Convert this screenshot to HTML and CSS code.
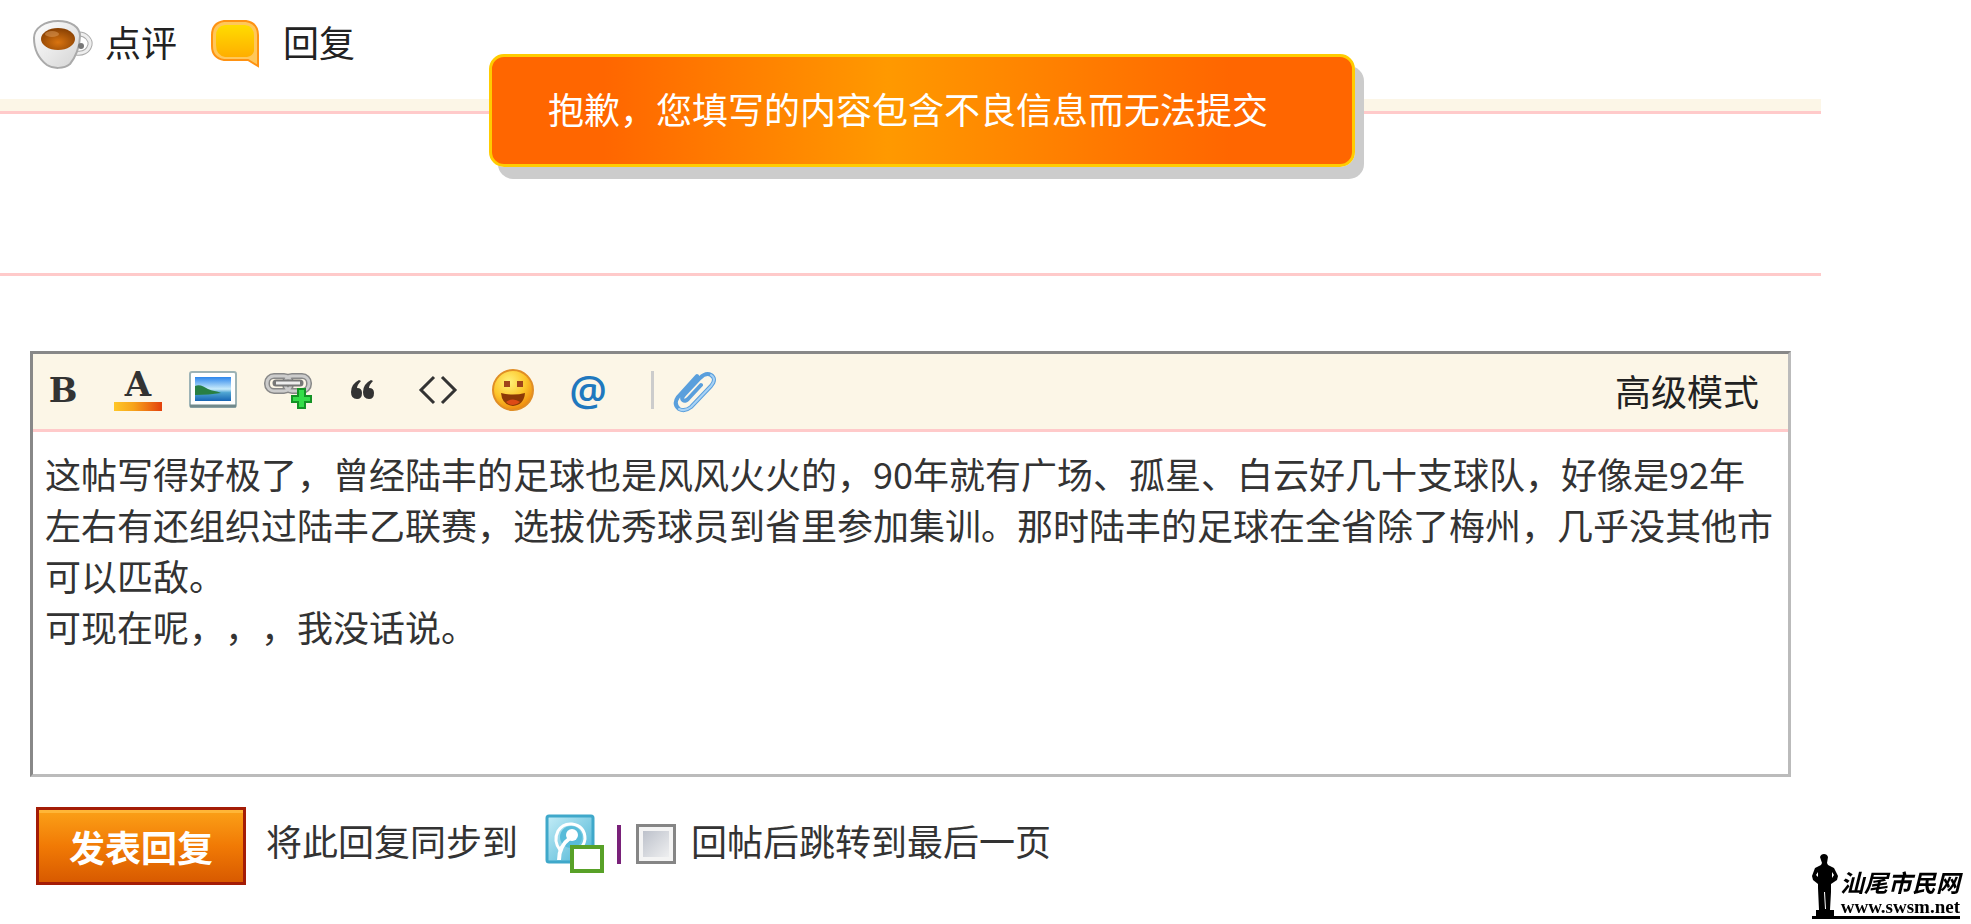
FILE: index.html
```html
<!DOCTYPE html>
<html lang="zh-CN">
<head>
    <meta charset="UTF-8">
    <meta name="viewport" content="width=device-width, initial-scale=1.0">
    <title>发表回复</title>
    <link rel="stylesheet" href="styles.css">
</head>
<body>
    <div class="thread">
        <div class="post-links">
            <a href="#comment">
                <svg width="62" height="52" viewBox="0 0 62 52">
                    <defs>
                        <linearGradient id="cup" x1="0" y1="0" x2="1" y2="1">
                            <stop offset="0" stop-color="#fff"/>
                            <stop offset="1" stop-color="#d4d4d4"/>
                        </linearGradient>
                        <radialGradient id="coffee" cx="50%" cy="65%" r="60%">
                            <stop offset="0" stop-color="#d97410"/>
                            <stop offset="1" stop-color="#8c4304"/>
                        </radialGradient>
                    </defs>
                    <path d="M47 15c7 0 12 6 11 11-2 7-8 9-14 8" fill="none" stroke="#aaa" stroke-width="5"/>
                    <path d="M47 15c7 0 12 6 11 11-2 7-8 9-14 8" fill="none" stroke="#eee" stroke-width="3"/>
                    <path d="M2 19C2 9 13 2 26 2s22 6 22 15c0 11-5 22-10 28-6 5-17 5-23 1C7 40 2 30 2 19z" fill="url(#cup)" stroke="#aaa" stroke-width="2"/>
                    <ellipse cx="26" cy="20" rx="17" ry="11" fill="url(#coffee)"/>
                    <ellipse cx="20" cy="15" rx="7" ry="3" fill="#e0a060" opacity=".5"/>
                    <circle cx="49" cy="27" r="3" fill="#777"/>
                </svg>
                <span>点评</span>
            </a>
            <a href="#reply" class="reply-link">
                <svg width="50" height="50" viewBox="0 0 50 50">
                    <defs>
                        <linearGradient id="bubble" x1="0" y1="0" x2="0" y2="1">
                            <stop offset="0" stop-color="#ffdc00"/>
                            <stop offset="1" stop-color="#ffae00"/>
                        </linearGradient>
                    </defs>
                    <path d="M14 2h22q12 2 12 14v31l-10-6H14Q2 39 2 27V16Q2 4 14 2z" fill="#ffc75a" stroke="#ff9212" stroke-width="2"/>
                    <path d="M15 6h20q9 1 9 11v15q-1 5-7 6H15q-9-2-9-12V17Q6 7 15 6z" fill="url(#bubble)"/>
                </svg>
                <span>回复</span>
            </a>
        </div>
        <div class="post-end"></div>
        <div class="pager"></div>

        <form class="fastpost">
            <div class="editor">
                <div class="toolbar">
                    <div class="tools">
                        <button type="button" title="粗体" class="tool-bold">B</button>
                        <button type="button" title="颜色" class="tool-color"><span>A</span><i></i></button>
                        <button type="button" title="图片">
                            <svg width="48" height="38" viewBox="0 0 48 38">
                                <defs>
                                    <linearGradient id="sky" x1="0" y1="0" x2="0" y2="1">
                                        <stop offset="0" stop-color="#2d86ec"/>
                                        <stop offset=".5" stop-color="#c9ecfb"/>
                                        <stop offset=".65" stop-color="#4fa5d2"/>
                                        <stop offset="1" stop-color="#1765b4"/>
                                    </linearGradient>
                                </defs>
                                <rect x="1" y="1" width="46" height="35" rx="2" fill="#fff" stroke="#9db3b6" stroke-width="2"/>
                                <path d="M1 35h46" stroke="#71898b" stroke-width="3"/>
                                <rect x="6" y="6" width="36" height="24" fill="url(#sky)"/>
                                <path d="M6 15c5-2 9 1 13 3s9 2 13 4c-8 1-17 2-26 2z" fill="#287f43"/>
                            </svg>
                        </button>
                        <button type="button" title="链接">
                            <svg width="48" height="38" viewBox="0 0 48 38">
                                <g fill="none" stroke="#888" stroke-width="6">
                                    <rect x="3" y="5" width="24" height="15" rx="7"/>
                                    <rect x="21" y="5" width="24" height="15" rx="7"/>
                                </g>
                                <g fill="none" stroke="#ccc" stroke-width="3">
                                    <rect x="3" y="5" width="24" height="15" rx="7"/>
                                    <rect x="21" y="5" width="24" height="15" rx="7"/>
                                </g>
                                <path d="M12 12h24" stroke="#777" stroke-width="7" stroke-linecap="round"/>
                                <path d="M12 12h24" stroke="#eee" stroke-width="3"/>
                                <path d="M34 18h7v7h6v6h-6v6h-7v-6h-6v-6h6z" fill="#35dd49" stroke="#149326" stroke-width="2"/>
                            </svg>
                        </button>
                        <button type="button" title="引用">
                            <svg width="24" height="24" viewBox="0 0 24 24">
                                <path id="q" d="M8 2Q0 6 0 14q0 7 6 7 5 0 5-6 0-5-5-5 0-3 4-7z" fill="#333"/>
                                <use href="#q" x="12"/>
                            </svg>
                        </button>
                        <button type="button" title="代码">
                            <svg width="40" height="30" viewBox="0 0 40 30">
                                <path d="M16 2L3 15l13 13M24 2l13 13-13 13" fill="none" stroke="#333" stroke-width="3"/>
                            </svg>
                        </button>
                        <button type="button" title="表情">
                            <svg width="44" height="44" viewBox="0 0 44 44">
                                <defs>
                                    <radialGradient id="face" cx="40%" cy="30%" r="70%">
                                        <stop offset="0" stop-color="#fff27a"/>
                                        <stop offset=".6" stop-color="#fdc62a"/>
                                        <stop offset="1" stop-color="#ee8b10"/>
                                    </radialGradient>
                                </defs>
                                <circle cx="22" cy="22" r="20" fill="url(#face)" stroke="#e08e26" stroke-width="2"/>
                                <path d="M13 13h6v6h-6zM26 13h6v6h-6z" fill="#a0441a"/>
                                <path d="M10 25q12 3 24 0-1 12-12 13-11-1-12-13z" fill="#8c3a06"/>
                                <path d="M15 34q7-5 14 0-7 6-14 0z" fill="#dd4b16"/>
                            </svg>
                        </button>
                        <button type="button" title="@朋友" class="tool-at">@</button>
                    </div>
                    <div class="attach">
                        <button type="button" title="附件">
                            <svg width="46" height="46" viewBox="0 0 46 46">
                                <g fill="none" stroke-linecap="round" stroke-linejoin="round">
                                    <path d="M29 18L16 32q-3 3-5 1t1-5L28 11q6-6 11-3 6 4 0 11L19 40q-6 5-12 2-6-5-1-12L25 9" stroke="#5a9fdc" stroke-width="4"/>
                                    <path d="M39 8q6 4 0 11L19 40q-6 5-12 2" stroke="#a8d2f5" stroke-width="2"/>
                                </g>
                            </svg>
                        </button>
                    </div>
                    <a href="#advanced" class="advanced">高级模式</a>
                </div>
                <textarea rows="6" aria-label="回复内容">这帖写得好极了，曾经陆丰的足球也是风风火火的，90年就有广场、孤星、白云好几十支球队，好像是92年左右有还组织过陆丰乙联赛，选拔优秀球员到省里参加集训。那时陆丰的足球在全省除了梅州，几乎没其他市可以匹敌。
可现在呢，，，我没话说。</textarea>
            </div>
            <div class="post-actions">
                <button type="submit" class="submit">发表回复</button>
                <div class="options">
                    <span class="text">将此回复同步到</span>
                    <a href="#weibo" class="sync" title="腾讯微博">
                        <svg width="60" height="60" viewBox="0 0 60 60">
                            <defs>
                                <linearGradient id="weibo" x1="0" y1="0" x2="1" y2="1">
                                    <stop offset="0" stop-color="#c4edf7"/>
                                    <stop offset="1" stop-color="#48b3d4"/>
                                </linearGradient>
                            </defs>
                            <rect x="2" y="2" width="46" height="46" rx="2" fill="url(#weibo)" stroke="#3fa8ca" stroke-width="3"/>
                            <path d="M15 36q-7-9-2-19 5-8 14-7 13 2 13 15-1 7-6 10" fill="none" stroke="#fff" stroke-width="3"/>
                            <circle cx="26" cy="23" r="11" fill="#58bcd9"/>
                            <circle cx="27" cy="21" r="6" fill="#fff"/>
                            <path d="M25 24q-11 8-11 22" fill="none" stroke="#fff" stroke-width="4"/>
                            <rect x="27" y="33" width="30" height="24" fill="#fff" stroke="#58a128" stroke-width="4"/>
                        </svg>
                    </a>
                    <span class="divider"></span>
                    <input type="checkbox" id="jump">
                    <label for="jump" class="text">回帖后跳转到最后一页</label>
                </div>
            </div>
        </form>
    </div>

    <div class="notice" role="alert">抱歉，您填写的内容包含不良信息而无法提交</div>

    <div class="site-mark">
        <svg width="28" height="62" viewBox="0 0 28 62">
            <path d="M8 3q1-3 4-3t4 3l-1 6 1 2 6 3 4 8-1 4-6 4v8l-1 18h4v6H4v-6h3L6 34v-4l-5-4-1-4 3-8 6-3 1-2z" fill="#000"/>
            <path d="M4 21l2-3v5zM22 21l-2-3v6zM12 38h1l1 17h-1z" fill="#fff"/>
        </svg>
        <div class="site-name">
            <span class="name">汕尾市民网</span>
            <span class="url">www.swsm.net</span>
        </div>
    </div>
</body>
</html>
```

FILE: styles.css
```css
body {
    position: relative;
    margin: 0;
    background-color: #fff;
    color: #333;
    font-family: "Noto Sans CJK SC", sans-serif;
    font-size: 36px;
    line-height: 51px;
    text-spacing-trim: space-all;
}
a {
    color: #222;
    text-decoration: none;
}
svg {
    display: block;
    flex: none;
}
button {
    padding: 0;
    border: none;
    background: none;
    color: #333;
    cursor: pointer;
}
.thread {
    margin-right: 150px;
}
.post-links {
    display: flex;
    gap: 33px;
    padding: 19px 32px 28px;
}
.post-links a {
    display: flex;
    align-items: flex-start;
    gap: 11px;
}
.post-links .reply-link {
    gap: 23px;
}
.post-links span {
    line-height: 44px;
}
.post-end {
    height: 12px;
    background-color: #fcf6e7;
    border-bottom: 3px solid #ffcaca;
}
.pager {
    height: 159px;
    border-bottom: 3px solid #ffcaca;
}
.fastpost {
    margin: 75px 30px 0;
}
.editor {
    border: 3px solid;
    border-color: #888 #bbb #bbb #888;
}
.toolbar {
    box-sizing: border-box;
    display: flex;
    align-items: center;
    height: 78px;
    padding: 0 29px 3px 6px;
    background-color: #fcf6e7;
    border-bottom: 3px solid #ffcaca;
}
.tools {
    display: flex;
    gap: 27px;
}
.tools button,
.attach button {
    display: flex;
    align-items: center;
    justify-content: center;
    width: 48px;
    height: 48px;
}
.tools .tool-bold,
.tools .tool-color {
    font-family: "DejaVu Serif", serif;
    font-size: 34px;
    font-weight: bold;
    line-height: 30px;
}
.tools .tool-color {
    flex-direction: column;
    gap: 3px;
}
.tool-color i {
    width: 48px;
    height: 9px;
    background: linear-gradient(to right, #ffc727, #f7a41b 40%, #ee7414 70%, #e3400c);
}
.tools .tool-at {
    color: #2078be;
    font-family: "Open Sans", sans-serif;
    font-size: 42px;
    font-weight: 600;
    line-height: 48px;
}
.attach {
    display: flex;
    align-items: center;
    margin-left: 39px;
    padding-left: 17px;
    border-left: 3px solid #ccc;
    height: 38px;
}
.advanced {
    margin-left: auto;
}
.editor textarea {
    display: block;
    box-sizing: border-box;
    width: 100%;
    padding: 16px 12px 20px;
    border: none;
    outline: none;
    resize: none;
    overflow: hidden;
    background-color: #fff;
    color: #333;
    font: inherit;
    text-spacing-trim: inherit;
}
.post-actions {
    display: flex;
    align-items: flex-start;
    gap: 20px;
    margin-top: 30px;
    padding-left: 6px;
}
.submit {
    height: 78px;
    padding: 0 30px;
    border: 3px solid #a41c06;
    background: linear-gradient(#fba118, #f17a05 50%, #d85a00);
    box-shadow: inset 0 3px #ffb638;
    color: #fff;
    font-family: inherit;
    font-size: 36px;
    font-weight: bold;
}
.options {
    display: flex;
    align-items: center;
    height: 74px;
}
.options .text {
    padding-bottom: 8px;
}
.sync {
    margin: 0 12px 0 27px;
}
.divider {
    width: 4px;
    height: 39px;
    margin-right: 15px;
    background-color: #792179;
}
.options input {
    appearance: none;
    width: 40px;
    height: 40px;
    margin: 0 15px 0 0;
    border: 3px solid #858585;
    background: linear-gradient(135deg, #b5bac5, #f6f6f6);
    box-shadow: inset 0 0 0 4px #f4f4f4;
}
.options input:checked {
    background: #4a78b5;
}
.notice {
    position: absolute;
    top: 54px;
    left: 489px;
    padding: 26px 84px 30px 56px;
    border: 3px solid #fc0;
    border-radius: 15px;
    background: linear-gradient(to right, #ff6600 13%, #ff9900 46%, #ff6600 86%);
    box-shadow: 9px 12px #ccc;
    color: #fff;
    white-space: nowrap;
}
.site-mark {
    position: fixed;
    right: 11px;
    bottom: 5px;
    display: flex;
    align-items: flex-end;
    border-bottom: 3px solid #000;
    color: #000;
}
.site-name {
    display: flex;
    flex-direction: column;
    align-items: flex-end;
}
.site-name .name {
    font-size: 24px;
    font-style: italic;
    font-weight: bold;
    line-height: 32px;
}
.site-name .url {
    font-family: "Liberation Serif", serif;
    font-size: 19px;
    font-weight: bold;
    line-height: 18px;
}
```
